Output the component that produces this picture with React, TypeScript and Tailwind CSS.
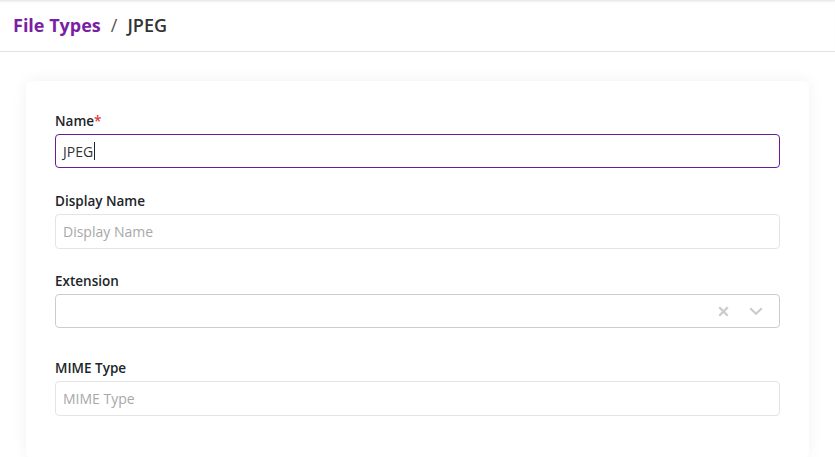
import React from 'react';

function Label({ text, required }: { text: string; required?: boolean }) {
  return (
    <label className="mb-[3px] block text-[13.5px] font-semibold leading-5 text-[#212529]">
      {text}
      {required && <span className="text-[#e53935]">*</span>}
    </label>
  );
}

export default function App() {
  return (
    <div className="min-h-[457px] bg-white font-['Open_Sans',sans-serif]">
      <div className="relative h-[52px] border-b border-[#e2e2e2] bg-white shadow-[inset_0_3px_3px_-2px_rgba(0,0,0,0.12)]">
        <div className="flex h-full items-center px-[13px] pb-[2px] text-[18px] leading-none">
          <span className="font-bold text-[#7b1fa2]">File Types</span>
          <span className="mx-[10px] text-[#555]">/</span>
          <span className="font-semibold text-[#333]">JPEG</span>
        </div>
      </div>

      <div className="px-[26px] pt-[29px]">
        <div className="rounded-[6px] bg-white px-[29px] pt-[30px] pb-[42px] shadow-[0_0_16px_rgba(0,0,0,0.06)]">
          <div>
            <Label text="Name" required />
            <div className="flex h-[34px] items-center rounded-[4px] border border-[#6a1b9a] px-[7px] text-[14px] text-[#333]">
              JPEG<span className="ml-[1px] h-[18px] w-px bg-[#222]" />
            </div>
          </div>

          <div className="mt-[23px]">
            <Label text="Display Name" />
            <input
              className="h-[35px] w-full rounded-[4px] border border-[#e4e4e4] px-[7px] text-[14px] text-[#333] outline-none placeholder:text-[#a8a8a8]"
              placeholder="Display Name"
            />
          </div>

          <div className="mt-[22px]">
            <Label text="Extension" />
            <div className="flex h-[34px] items-center justify-end rounded-[4px] border border-[#cccccc] pr-[14px]">
              <svg viewBox="0 0 20 20" className="h-[17px] w-[17px] text-[#cccccc]" fill="none" stroke="currentColor" strokeWidth="2.8" strokeLinecap="butt">
                <path d="M5 5l10 10M15 5L5 15" />
              </svg>
              <svg viewBox="0 0 20 20" className="ml-[15px] h-[18px] w-[18px] text-[#cccccc]" fill="none" stroke="currentColor" strokeWidth="2.4">
                <path d="M3.5 7l6.5 6 6.5-6" />
              </svg>
            </div>
          </div>

          <div className="mt-[30px]">
            <Label text="MIME Type" />
            <input
              className="h-[35px] w-full rounded-[4px] border border-[#e4e4e4] px-[7px] text-[14px] text-[#333] outline-none placeholder:text-[#a8a8a8]"
              placeholder="MIME Type"
            />
          </div>
        </div>
      </div>
    </div>
  );
}
